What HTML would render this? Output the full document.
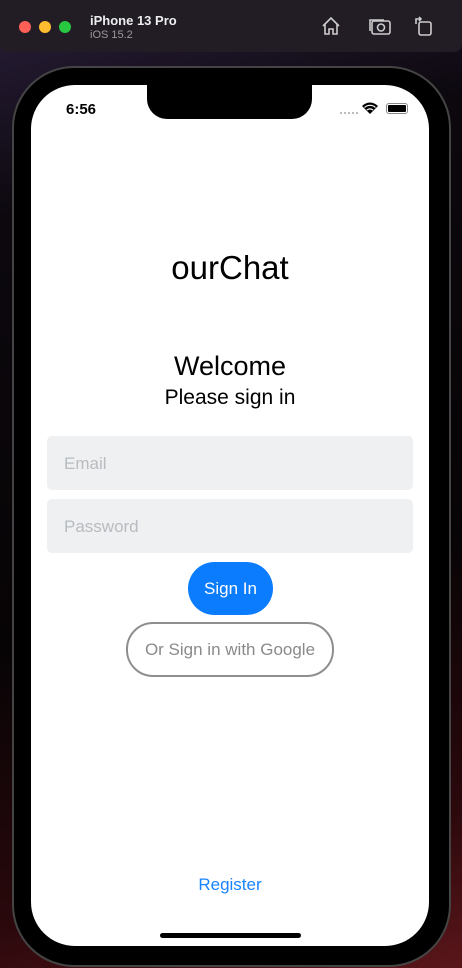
<!DOCTYPE html>
<html><head><meta charset="utf-8"><style>
*{margin:0;padding:0;box-sizing:border-box}
body{width:462px;height:968px;overflow:hidden;background:#0b0608;font-family:"Liberation Sans",sans-serif;position:relative}
.bg1{position:absolute;left:0;top:0;width:462px;height:968px;background:linear-gradient(165deg,#2a1f3a 0%,#0c080e 20%,#070405 60%,#2a080c 85%,#5a161a 100%)}
.bar{position:absolute;left:0;top:0;width:462px;height:52px;background:#221c24;border-radius:0 0 8px 8px}
.dot{position:absolute;top:21px;width:12px;height:12px;border-radius:50%}
.t1{position:absolute;left:90px;top:13px;color:#eee;font-weight:bold;font-size:13px}
.t2{position:absolute;left:90px;top:29px;color:#999;font-size:11px}
.phone{position:absolute;left:12px;top:66px;width:439px;height:901px;background:#000;border-radius:62px;border:2px solid #444}
.screen{position:absolute;left:31px;top:85px;width:398px;height:861px;background:#fff;border-radius:44px;overflow:hidden}
.notch{position:absolute;left:116px;top:0;width:165px;height:34px;background:#000;border-radius:0 0 20px 20px}
.c{position:absolute;left:0;width:398px;text-align:center}
.field{position:absolute;left:16px;width:366px;height:54px;background:#eef0f1;border-radius:5px;color:#b8bcc0;font-size:17px;padding:18px 0 0 17px}
</style></head><body>
<div class="bg1"></div>
<div class="bar">
<div class="dot" style="left:19px;background:#fe5f57"></div>
<div class="dot" style="left:39px;background:#febc2e"></div>
<div class="dot" style="left:59px;background:#28c840"></div>
<div class="t1">iPhone 13 Pro</div><div class="t2">iOS 15.2</div>
<svg style="position:absolute;left:320px;top:15px" width="22" height="22" viewBox="0 0 22 22" fill="none" stroke="#ccc" stroke-width="1.6"><path d="M3 11L11 3l8 8M5 9v10h4v-5h4v5h4V9"/></svg>
<svg style="position:absolute;left:368px;top:16px" width="24" height="20" viewBox="0 0 24 20" fill="none" stroke="#ccc" stroke-width="1.6"><rect x="4" y="5" width="18" height="13" rx="2"/><circle cx="13" cy="11.5" r="3.5"/><path d="M2 15V4h14"/></svg>
<svg style="position:absolute;left:414px;top:15px" width="20" height="22" viewBox="0 0 20 22" fill="none" stroke="#ccc" stroke-width="1.6"><rect x="5" y="7" width="12" height="13" rx="2"/><path d="M2 9V4h5M5 2l2 2-2 2"/></svg>
</div>
<div class="phone"></div>
<div class="screen">
<div class="notch"></div>
<div style="position:absolute;left:35px;top:16px;font-size:15px;font-weight:bold">6:56</div>
<div style="position:absolute;left:309px;top:27px;width:18px;border-top:2px dotted #bbb"></div>
<svg style="position:absolute;left:331px;top:17px" width="16" height="12" viewBox="0 0 16 12"><path d="M8 12L0 4a11 11 0 0 1 16 0z" fill="#000"/><path d="M2.5 5.5a8 8 0 0 1 11 0M5 8a4.5 4.5 0 0 1 6 0" stroke="#fff" stroke-width="1.2" fill="none"/></svg>
<div style="position:absolute;left:355px;top:18px;width:22px;height:11px;border:1px solid #888;border-radius:3px;padding:1px"><div style="width:100%;height:100%;background:#000;border-radius:1px"></div></div>
<div class="c" style="top:164px;font-size:33px">ourChat</div>
<div class="c" style="top:266px;font-size:27px">Welcome</div>
<div class="c" style="top:301px;font-size:21px">Please sign in</div>
<div class="field" style="top:351px">Email</div>
<div class="field" style="top:414px">Password</div>
<div style="position:absolute;left:157px;top:477px;width:85px;height:53px;border-radius:27px;background:#0a7cfd;color:#fff;font-size:17px;text-align:center;line-height:53px">Sign In</div>
<div style="position:absolute;left:95px;top:537px;width:208px;height:55px;border-radius:27px;border:2px solid #8e8e8e;color:#8a8a8a;font-size:17px;text-align:center;line-height:51px">Or Sign in with Google</div>
<div class="c" style="top:790px;font-size:17px;color:#1a84ff">Register</div>
<div style="position:absolute;left:129px;top:848px;width:141px;height:5px;border-radius:3px;background:#000"></div>
</div>
</body></html>
